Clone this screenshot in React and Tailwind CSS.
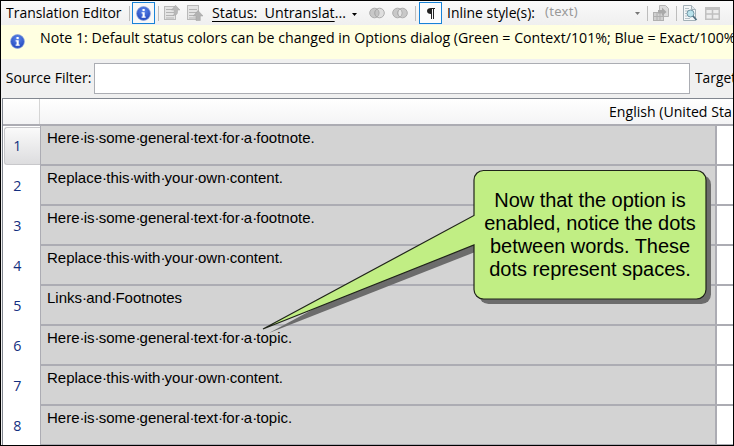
import React from "react";

const uiFont = "font-['Open_Sans','Noto_Sans',sans-serif]";

const here = (what) => `Here is some general text for a ${what}.`;
const replace = "Replace this with your own content.";
const rows = [
  here("footnote"),
  replace,
  here("footnote"),
  replace,
  "Links and Footnotes",
  here("topic"),
  replace,
  here("topic"),
];

// Words joined by visible space marks, each as wide as a plain space.
function MarkedText({ text }) {
  return text.split(" ").map((word, i) => (
    <React.Fragment key={i}>
      {i > 0 && <span className="tracking-[-0.83px]">·</span>}
      {word}
    </React.Fragment>
  ));
}

function InfoIcon() {
  return (
    <svg className="block size-[15px]" viewBox="0 0 15 15">
      <defs>
        <radialGradient id="info" cx="50%" cy="30%" r="70%">
          <stop offset="0" stopColor="#5b86ea" />
          <stop offset="1" stopColor="#2146bd" />
        </radialGradient>
      </defs>
      <circle cx="7.5" cy="7.5" r="6.9" fill="url(#info)" stroke="#8ea6dc" strokeWidth="0.7" />
      <rect x="6.5" y="3" width="2.2" height="2.1" fill="#fff" />
      <path d="M5.6 6.2h3.1v4.4h1v1.2H5.6v-1.2h1V7.4h-1z" fill="#fff" />
    </svg>
  );
}

function DocArrow({ down }) {
  return (
    <svg className="block size-4" viewBox="0 0 16 16">
      <rect x="0.5" y={down ? 0.5 : 1.5} width="11" height={down ? 14 : 13} fill="#e4e4e4" stroke="#b9b9b9" />
      <path d="M2 4.5h8M2 7.5h8M2 10.5h8M2 13h8" stroke="#b4b4b4" />
      {down ? (
        <path d="M11 5.5L16 11h-2.7v4.5H9V11H6.3z" fill="#b3b3b3" stroke="#a0a0a0" strokeWidth="0.5" />
      ) : (
        <path d="M11.500 0.300L16 5h-2.500v2.500c0 2-2 3-4.500 3 1-.8 1.200-1.500 1.200-3V5H7.500z" fill="#b8b8b8" stroke="#a4a4a4" strokeWidth="0.5" />
      )}
    </svg>
  );
}

function Circles({ merged }) {
  return (
    <svg className="block h-3 w-4" viewBox="0 0 16 12">
      <circle cx="5.5" cy="6" r="4.8" fill="#c8c8c8" stroke="#adadad" />
      <circle cx="10.5" cy="6" r="4.8" fill={merged ? "#c8c8c8" : "#dedede"} stroke="#adadad" />
      <path d="M8 2a4.800 4.800 0 0 1 0 8a4.800 4.800 0 0 1 0-8z" fill={merged ? "#e6e6e6" : "#c4c4c4"} stroke="#a5a5a5" strokeWidth="0.8" />
    </svg>
  );
}

function TransferIcon() {
  return (
    <svg className="block size-4" viewBox="0 0 16 16">
      <path d="M6.500 0.500h6l3 3v8h-9z" fill="#dcdcdc" stroke="#b5b5b5" />
      <rect x="0.5" y="7.5" width="10" height="8" fill="#d0d0d0" stroke="#b0b0b0" />
      <path d="M1 11.500h9M4 8v7M7 8v7" stroke="#b0b0b0" />
      <path d="M5 5h4V2.500L13.500 7 9 11V8.500H5z" fill="#a9a9a9" />
    </svg>
  );
}

function PreviewIcon() {
  return (
    <svg className="block size-4" viewBox="0 0 16 16">
      <path d="M1.500 0.500h8l4 4v11h-12z" fill="#f4f7f8" stroke="#a3b0b7" />
      <path d="M9.500 0.500v4h4" fill="#dfe8ec" stroke="#a3b0b7" />
      <path d="M3 3.500h4M3 6h3M3 8.500h2M3 11h2M3 13.500h5" stroke="#b3c0c6" />
      <circle cx="8.5" cy="8.5" r="3.5" fill="#b9e3ec" stroke="#6f93a2" />
      <path d="M11 11l3.500 4" stroke="#527080" strokeWidth="1.8" />
    </svg>
  );
}

function TableIcon() {
  return (
    <svg className="block h-[13px] w-[15px]" viewBox="0 0 15 13">
      <rect x="0.75" y="0.75" width="13.5" height="11.5" fill="#ededed" stroke="#c0c0c0" strokeWidth="1.5" />
      <path d="M0 2h15" stroke="#c0c0c0" strokeWidth="2" />
      <path d="M7.500 2v10M1 7h13" stroke="#c0c0c0" strokeWidth="1.5" />
    </svg>
  );
}

const Divider = () => <div className="h-[15px] w-px shrink-0 bg-[#bdbdbd]" />;

const Caret = ({ className = "" }) => (
  <svg className={`block h-[3px] w-[5px] shrink-0 ${className}`} viewBox="0 0 5 3">
    <path d="M0 0h5L2.500 3z" fill="currentColor" />
  </svg>
);

const Slot = ({ className, children }) => (
  <div className={`flex h-full shrink-0 items-center ${className}`}>{children}</div>
);

function Toolbar() {
  return (
    <div className="flex h-6 shrink-0 items-center bg-linear-to-b from-[#fafafa] to-[#efefef] whitespace-nowrap">
      <Slot className="w-[123px] pl-[5px]">
        <span className="origin-left scale-x-[0.93] pb-0.5 text-[15px]">Translation Editor</span>
      </Slot>
      <Slot className="w-[8px] pl-[5px]"><Divider /></Slot>
      <div className="flex h-[22px] w-[23px] shrink-0 items-center justify-center border border-[#1883d7] bg-[#f8f8f8]">
        <InfoIcon />
      </div>
      <Slot className="w-[9px] pl-[3px]"><Divider /></Slot>
      <Slot className="w-[23px]"><DocArrow /></Slot>
      <Slot className="w-[24px]"><DocArrow down /></Slot>
      <Slot className="w-[140px] pl-px">
        <span className="origin-left scale-x-[0.95] pb-0.5 text-[15px] whitespace-pre">
          <span className="underline decoration-1 underline-offset-3">{"Status:  Untranslat"}</span>...
        </span>
      </Slot>
      <Slot className="w-[18px] pt-[3px] pl-px"><Caret /></Slot>
      <Slot className="w-[23px]"><Circles /></Slot>
      <Slot className="w-[23px]"><Circles merged /></Slot>
      <Slot className="w-[4px]"><Divider /></Slot>
      <div className="flex h-[22px] w-[23px] shrink-0 items-center justify-center border border-[#1883d7] bg-[#fcfcfc]">
        <svg className="block h-[11px] w-2" viewBox="0 0 8 11">
          <path d="M8 0v1H7v10H6V1H5v10H4V6C1.500 6 0 5 0 3s1.500-3 4-3z" fill="#222" />
        </svg>
      </div>
      <Slot className="w-[103px] pl-[5px]">
        <span className="origin-left scale-x-[0.93] pb-0.5 text-[15px]">Inline style(s):</span>
      </Slot>
      <Slot className="w-[90px]">
        <span className="pb-0.5 font-['Noto_Sans',sans-serif] text-[13px] tracking-[0.3px] text-[#999]">(text)</span>
      </Slot>
      <Slot className="w-[12px]"><Caret className="text-[#777]" /></Slot>
      <Slot className="w-[6px]"><Divider /></Slot>
      <Slot className="w-[23px]"><TransferIcon /></Slot>
      <Slot className="w-[6px]"><Divider /></Slot>
      <Slot className="w-[23px]"><PreviewIcon /></Slot>
      <Slot className="w-[15px]"><TableIcon /></Slot>
    </div>
  );
}

function Row({ number, text }) {
  return (
    <div className="flex h-10 shrink-0">
      <div
        className={
          number === 1
            ? "mt-px ml-px flex h-[38px] w-9 shrink-0 items-center rounded-l-[3px] border border-r-0 border-[#c8c8cb] bg-linear-to-b from-[#fafafa] to-[#dddddf] pb-px pl-2 text-[15px] text-[#132f80]"
            : "flex w-[37px] shrink-0 items-center pb-px pl-2.5 text-[15px] text-[#132f80]"
        }
      >
        <span className="scale-x-[0.95]">{number}</span>
      </div>
      <div className="flex w-[677px] shrink-0 border-x-2 border-b-2 border-l-1 border-[#acacb3] bg-[#d3d3d3] pl-[6px] font-['Liberation_Sans',Arial,sans-serif] text-[15px] leading-[17px]">
        <span className="mt-[3px] whitespace-nowrap">
          <MarkedText text={text} />
        </span>
      </div>
      <div className="grow border-b-2 border-[#acacb3] bg-white" />
    </div>
  );
}

export default function App() {
  return (
    <div className={`relative flex h-[446px] w-[734px] flex-col overflow-hidden border border-black bg-[#f0f0f0] text-black ${uiFont}`}>
      <Toolbar />
      <div className="flex h-[34px] shrink-0 overflow-hidden bg-[#ffffe1]">
        <div className="w-[39px] shrink-0 pt-[9px] pl-[9px]"><InfoIcon /></div>
        <span className="origin-left scale-x-[0.945] text-[15px] leading-[25px] whitespace-nowrap">
          Note 1: Default status colors can be changed in Options dialog (Green = Context/101%; Blue = Exact/100%
        </span>
      </div>
      <div className="flex h-[39px] shrink-0 items-center overflow-hidden pb-px">
        <span className="w-[88px] shrink-0 origin-left scale-x-[0.94] pb-px pl-[5px] text-[15px] whitespace-nowrap">Source Filter:</span>
        <div className="ml-[5px] h-[31px] w-[596px] shrink-0 border border-[#abadb3] bg-white" />
        <span className="ml-[5px] origin-left scale-x-[0.92] pb-px text-[15px] whitespace-nowrap">Target</span>
      </div>
      <div className="ml-px flex h-[347px] shrink-0 flex-col border-t border-l border-[#828790] bg-white">
        <div className="flex h-[27px] shrink-0 border-b-2 border-[#acacb3] bg-linear-to-b from-white to-[#f4f4f5]">
          <div className="w-[37px] shrink-0 border-r border-[#d5d5d5]" />
          <div className="flex grow items-center overflow-hidden pl-[569px]">
            <span className="origin-left scale-x-[0.94] text-[15px] whitespace-nowrap">English (United Sta</span>
          </div>
        </div>
        {rows.map((text, i) => (
          <Row key={i} number={i + 1} text={text} />
        ))}
      </div>
      <svg className="absolute top-[159px] left-[254px]" width="470" height="190" viewBox="255 160 470 190">
        <path d="M479 220L269 333L479 250.500z" fill="#6c6c6c" />
        <rect x="479" y="175" width="232" height="129" rx="9.5" fill="#6c6c6c" />
        <path
          d="M483.500 170.500H696.500a9.500 9.500 0 0 1 9.500 9.500V289.500a9.500 9.500 0 0 1-9.500 9.500H483.500a9.500 9.500 0 0 1-9.500-9.500V245L263 329L474 215.500V180a9.500 9.500 0 0 1 9.500-9.500z"
          fill="#c1ee84"
          stroke="#20241a"
          strokeWidth="1.2"
        />
      </svg>
      <div className="absolute top-[188px] left-[473px] w-[232px] text-center font-['Liberation_Sans',Arial,sans-serif] text-[20px] leading-[23px] tracking-[-0.04px]">
        <div>Now that the option is</div>
        <div>enabled, notice the dots</div>
        <div>between words. These</div>
        <div>dots represent spaces.</div>
      </div>
    </div>
  );
}
